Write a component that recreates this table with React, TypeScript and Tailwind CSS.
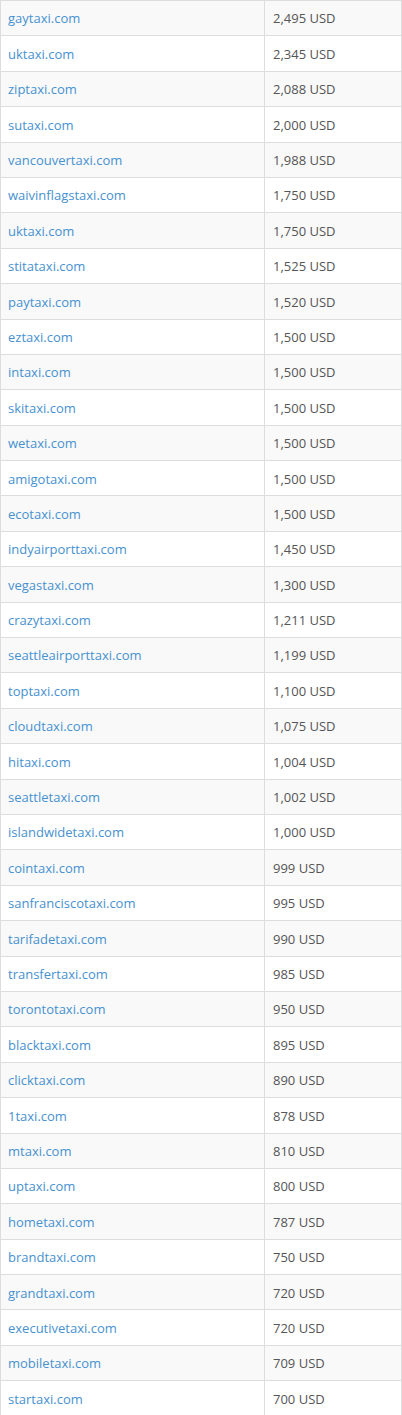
const ROWS: [string, string][] = [
  ['gaytaxi.com', '2,495 USD'],
  ['uktaxi.com', '2,345 USD'],
  ['ziptaxi.com', '2,088 USD'],
  ['sutaxi.com', '2,000 USD'],
  ['vancouvertaxi.com', '1,988 USD'],
  ['waivinflagstaxi.com', '1,750 USD'],
  ['uktaxi.com', '1,750 USD'],
  ['stitataxi.com', '1,525 USD'],
  ['paytaxi.com', '1,520 USD'],
  ['eztaxi.com', '1,500 USD'],
  ['intaxi.com', '1,500 USD'],
  ['skitaxi.com', '1,500 USD'],
  ['wetaxi.com', '1,500 USD'],
  ['amigotaxi.com', '1,500 USD'],
  ['ecotaxi.com', '1,500 USD'],
  ['indyairporttaxi.com', '1,450 USD'],
  ['vegastaxi.com', '1,300 USD'],
  ['crazytaxi.com', '1,211 USD'],
  ['seattleairporttaxi.com', '1,199 USD'],
  ['toptaxi.com', '1,100 USD'],
  ['cloudtaxi.com', '1,075 USD'],
  ['hitaxi.com', '1,004 USD'],
  ['seattletaxi.com', '1,002 USD'],
  ['islandwidetaxi.com', '1,000 USD'],
  ['cointaxi.com', '999 USD'],
  ['sanfranciscotaxi.com', '995 USD'],
  ['tarifadetaxi.com', '990 USD'],
  ['transfertaxi.com', '985 USD'],
  ['torontotaxi.com', '950 USD'],
  ['blacktaxi.com', '895 USD'],
  ['clicktaxi.com', '890 USD'],
  ['1taxi.com', '878 USD'],
  ['mtaxi.com', '810 USD'],
  ['uptaxi.com', '800 USD'],
  ['hometaxi.com', '787 USD'],
  ['brandtaxi.com', '750 USD'],
  ['grandtaxi.com', '720 USD'],
  ['executivetaxi.com', '720 USD'],
  ['mobiletaxi.com', '709 USD'],
  ['startaxi.com', '700 USD'],
];

export default function App() {
  return (
    <div className="w-[402px] bg-white font-['Open_Sans',sans-serif] text-[13px]">
      <div className="border-t border-l border-r border-[#dddddd]">
        {ROWS.map(([domain, price], i) => (
          <div
            key={i}
            className={`flex h-[35.4px] border-b border-[#dddddd] ${i % 2 === 0 ? 'bg-[#f9f9f9]' : 'bg-white'}`}
          >
            <div className="flex w-[264px] items-center border-r border-[#dddddd] pt-[2px] pl-[7px]">
              <a href="#" className="text-[#4791d0]">
                {domain}
              </a>
            </div>
            <div className="flex flex-1 items-center pt-[2px] pl-[8px] text-[#555555]">{price}</div>
          </div>
        ))}
      </div>
    </div>
  );
}
